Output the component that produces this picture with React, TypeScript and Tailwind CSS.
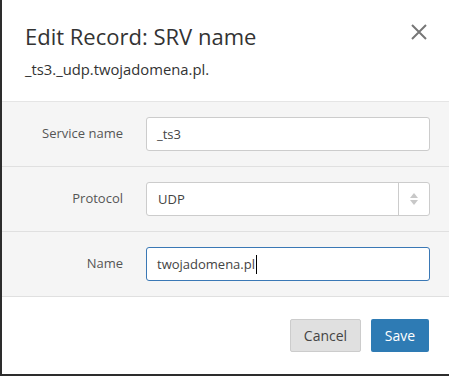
import React, { useState } from "react";

const fields = [
  { label: "Service name", value: "_ts3" },
  { label: "Protocol", value: "UDP", select: true },
  { label: "Name", value: "twojadomena.pl", focus: true },
];

const App = () => {
  const [values] = useState(fields);

  return (
    <div
      className="w-[449px] h-[376px] bg-[#2d2d2d] pl-[2px] pb-[2px]"
      style={{ fontFamily: '"Open Sans", sans-serif' }}
    >
      <div className="h-full bg-white flex flex-col">
        <div className="relative px-[23px] pt-[21px] h-[102px] border-b border-[#e5e5e5]">
          <h1 className="text-[22px] leading-[30px] text-[#333]">Edit Record: SRV name</h1>
          <p className="mt-[8px] text-[14.8px] leading-[20px] text-[#333]">_ts3._udp.twojadomena.pl.</p>
          <button className="absolute right-[22px] top-[24px] text-[#777]">
            <svg width="16" height="16" viewBox="0 0 16 16">
              <path d="M1 1L15 15M15 1L1 15" stroke="currentColor" strokeWidth="2" />
            </svg>
          </button>
        </div>

        <div className="bg-[#f5f5f5]">
          {values.map((f) => (
            <div
              key={f.label}
              className="flex items-center h-[65px] border-b border-[#e0e0e0]"
            >
              <label className="w-[121px] text-right text-[13px] text-[#555]">{f.label}</label>
              <div className="ml-[23px] w-[284px]">
                {f.select ? (
                  <div className="flex h-[34px] bg-white border border-[#ccc] rounded-[3px]">
                    <span className="flex-1 pl-[11px] leading-[32px] text-[13px] text-[#444]">
                      {f.value}
                    </span>
                    <span className="w-[31px] border-l border-[#ccc] flex flex-col items-center justify-center gap-[2px]">
                      <svg width="8" height="5" viewBox="0 0 8 5">
                        <path d="M0 5L4 0L8 5Z" fill="#c8c8c8" />
                      </svg>
                      <svg width="8" height="5" viewBox="0 0 8 5">
                        <path d="M0 0L4 5L8 0Z" fill="#c8c8c8" />
                      </svg>
                    </span>
                  </div>
                ) : (
                  <div
                    className={
                      f.focus
                        ? "h-[34px] bg-white border border-[#3a78b5] rounded-[3px] pl-[10px] leading-[32px] text-[13px] text-[#444] flex items-center"
                        : "h-[34px] bg-white border border-[#ccc] rounded-[3px] pl-[10px] leading-[32px] text-[13px] text-[#444]"
                    }
                  >
                    {f.value}
                    {f.focus && <span className="inline-block w-px h-[19px] bg-black ml-px" />}
                  </div>
                )}
              </div>
            </div>
          ))}
        </div>

        <div className="flex justify-end gap-[10px] pr-[20px] pt-[22px]">
          <button className="w-[71px] h-[33px] bg-[#e0e0e0] border border-[#ccc] rounded-[2px] text-[14px] text-[#444]">
            Cancel
          </button>
          <button className="w-[58px] h-[33px] bg-[#2e7bb4] rounded-[2px] text-[14px] text-white">
            Save
          </button>
        </div>
      </div>
    </div>
  );
};

export default App;
